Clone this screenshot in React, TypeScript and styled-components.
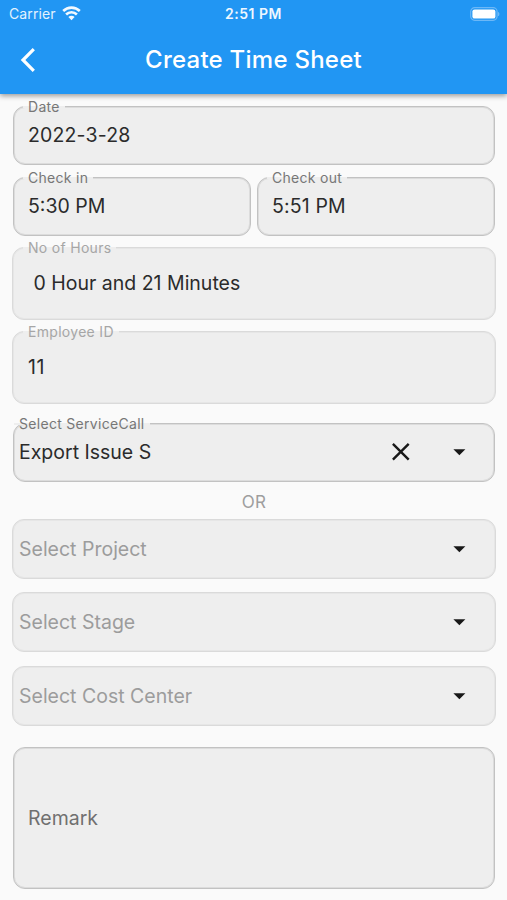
import React from "react";
import styled, { createGlobalStyle } from "styled-components";

const GlobalStyle = createGlobalStyle`
  *, *::before, *::after { box-sizing: border-box; }
  html, body { margin: 0; background: #fafafa; }
  body { font-family: Inter, "Liberation Sans", sans-serif; }
`;

const Screen = styled.div`
  width: 507px;
  height: 900px;
  overflow: hidden;
  display: flex;
  flex-direction: column;
  background: #fafafa;
`;

const Header = styled.header`
  flex: none;
  height: 94px;
  background: #2196f3;
  color: #fff;
  box-shadow: 0 2px 5px rgba(0, 0, 0, 0.38);
`;

const StatusBar = styled.div`
  height: 27px;
  padding: 0 7px 0 9px;
  display: grid;
  grid-template-columns: 1fr auto 1fr;
  align-items: center;
  font-size: 14px;
  line-height: 20px;
`;

const Carrier = styled.div`
  display: flex;
  align-items: center;
  gap: 6px;
  letter-spacing: 0.1px;
  color: #e3f2fe;
`;

const Clock = styled.div`
  margin-right: 2px;
  font-weight: 600;
  font-size: 14px;
  letter-spacing: 0.5px;
  color: #eef7ff;
`;

const BatterySlot = styled.div`
  display: flex;
  justify-content: flex-end;
`;

const NavBar = styled.div`
  height: 67px;
  padding: 0 14px;
  display: grid;
  grid-template-columns: 40px 1fr 40px;
  align-items: center;
`;

const BackButton = styled.button`
  border: 0;
  padding: 0 0 2px 5px;
  background: none;
  color: inherit;
  display: flex;
`;

const Title = styled.h1`
  margin: 0 0 1px;
  text-align: center;
  font-size: 24px;
  font-weight: 500;
  line-height: 30px;
  letter-spacing: 0.25px;
`;

const Form = styled.main`
  padding: 12px 12px 0 13px;
  display: flex;
  flex-direction: column;
`;

const Row = styled.div`
  display: grid;
  grid-template-columns: 1fr 1fr;
  gap: 6px;
  margin-top: 12px;
`;

const Field = styled.div<{ $height: number; $top?: number; $inset?: number; $disabled?: boolean }>`
  position: relative;
  flex: none;
  height: ${(p) => p.$height}px;
  margin: ${(p) => p.$top ?? 0}px ${(p) => (p.$disabled ? -1 : 0)}px 0;
  padding-left: ${(p) => (p.$inset ?? 14) + (p.$disabled ? 1 : 0)}px;
  padding-right: ${(p) => (p.$disabled ? 28 : 27)}px;
  border: 1px solid ${(p) => (p.$disabled ? "#dadada" : "#c2c2c2")};
  border-radius: 12px;
  background: #eee;
  box-shadow: inset 0 0 0 1px ${(p) => (p.$disabled ? "#e6e6e6" : "#dcdcdc")};
  display: flex;
  align-items: center;
`;

const Label = styled.span<{ $left: number; $disabled?: boolean }>`
  position: absolute;
  top: -10px;
  left: ${(p) => p.$left}px;
  padding: 0 5px;
  font-size: 14px;
  line-height: 19px;
  letter-spacing: 0.3px;
  white-space: nowrap;
  color: ${(p) => (p.$disabled ? "#a6a6a6" : "#777")};
  background: linear-gradient(#eee, #eee) 0 9px / 100% 2px no-repeat;
`;

const Value = styled.span<{ $tone?: "hint" | "label"; $spacing?: number }>`
  flex: 1;
  font-size: 19.5px;
  line-height: 24px;
  letter-spacing: ${(p) => p.$spacing ?? 0}px;
  white-space: pre;
  padding-bottom: ${(p) => (p.$tone ? 0 : 2)}px;
  color: ${(p) => (p.$tone === "hint" ? "#9c9c9c" : p.$tone === "label" ? "#707070" : "#2b2b2b")};
`;

const Actions = styled.div<{ $raised?: boolean }>`
  display: flex;
  align-items: center;
  gap: 43px;
  padding-bottom: ${(p) => (p.$raised ? 2 : 1)}px;
`;

const Divider = styled.div`
  height: 37px;
  display: flex;
  align-items: center;
  justify-content: center;
  padding-top: 3px;
  font-size: 17px;
  letter-spacing: 0.2px;
  color: #9e9e9e;
`;

const Wifi = () => (
  <svg width="19" height="15" viewBox="0 0 19 15" fill="none" stroke="#f2f9ff" strokeWidth="2.6">
    <path d="M1.2 5a11.8 11.8 0 0 1 16.6 0" />
    <path d="M4.1 8.5a7.6 7.6 0 0 1 10.8 0" />
    <path d="M9.5 14.2 6.4 11.1a4.4 4.4 0 0 1 6.2 0Z" fill="#f2f9ff" stroke="none" />
  </svg>
);

const Battery = () => (
  <svg width="30" height="14" viewBox="0 0 30 14">
    <rect x="0.7" y="0.7" width="26.4" height="12.6" rx="4" fill="none" stroke="#6cb8f7" strokeWidth="1.2" />
    <rect x="2.4" y="2.4" width="23" height="9.2" rx="2.2" fill="#fff" />
    <path d="M28 4.9c1.9.5 1.9 3.7 0 4.2Z" fill="#6cb8f7" />
  </svg>
);

const BackIcon = () => (
  <svg width="18" height="26" viewBox="0 0 18 26" fill="none" stroke="#fff" strokeWidth="3.2">
    <path d="M14.8 2.2 4 13l10.8 10.8" />
  </svg>
);

const CloseIcon = () => (
  <svg width="18" height="18" viewBox="0 0 18 18" stroke="#181818" strokeWidth="2.4">
    <path d="M.9 .9 16.7 16.7M16.7 .9 .9 16.7" />
  </svg>
);

const Caret = () => (
  <svg width="14" height="8" viewBox="0 0 14 8" fill="#181818">
    <path d="M.4 1.2h12L6.4 7.3Z" />
  </svg>
);

export default function App() {
  return (
    <>
      <GlobalStyle />
      <Screen>
        <Header>
          <StatusBar>
            <Carrier>
              Carrier <Wifi />
            </Carrier>
            <Clock>2:51 PM</Clock>
            <BatterySlot>
              <Battery />
            </BatterySlot>
          </StatusBar>
          <NavBar>
            <BackButton aria-label="Back">
              <BackIcon />
            </BackButton>
            <Title>Create Time Sheet</Title>
          </NavBar>
        </Header>
        <Form>
          <Field $height={59}>
            <Label $left={9}>Date</Label>
            <Value $spacing={0.15}>2022-3-28</Value>
          </Field>
          <Row>
            <Field $height={59}>
              <Label $left={9}>Check in</Label>
              <Value>5:30 PM</Value>
            </Field>
            <Field $height={59}>
              <Label $left={9}>Check out</Label>
              <Value $spacing={0.15}>5:51 PM</Value>
            </Field>
          </Row>
          <Field $height={73} $top={11} $disabled>
            <Label $left={10} $disabled>No of Hours</Label>
            <Value> 0 Hour and 21 Minutes</Value>
          </Field>
          <Field $height={73} $top={11} $disabled>
            <Label $left={10} $disabled>Employee ID</Label>
            <Value $spacing={0.6}>11</Value>
          </Field>
          <Field $height={59} $top={19} $inset={5}>
            <Label $left={0}>Select ServiceCall</Label>
            <Value>Export Issue S</Value>
            <Actions $raised>
              <CloseIcon />
              <Caret />
            </Actions>
          </Field>
          <Divider>OR</Divider>
          <Field $height={60} $inset={5} $disabled>
            <Value $tone="hint">Select Project</Value>
            <Actions><Caret /></Actions>
          </Field>
          <Field $height={60} $top={13} $inset={5} $disabled>
            <Value $tone="hint">Select Stage</Value>
            <Actions><Caret /></Actions>
          </Field>
          <Field $height={60} $top={14} $inset={5} $disabled>
            <Value $tone="hint">Select Cost Center</Value>
            <Actions><Caret /></Actions>
          </Field>
          <Field $height={142} $top={21}>
            <Value $tone="label">Remark</Value>
          </Field>
        </Form>
      </Screen>
    </>
  );
}
